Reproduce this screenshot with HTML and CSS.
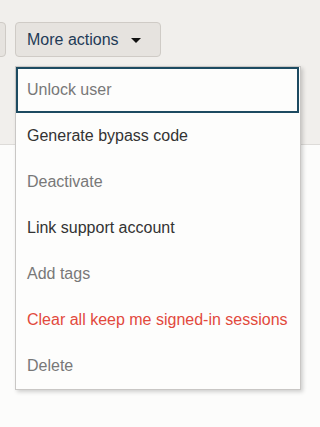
FILE: index.html
```html
<!DOCTYPE html>
<html lang="en">
<head>
<meta charset="utf-8">
<title>More actions</title>
<link rel="stylesheet" href="styles.css">
</head>
<body>
<div class="header">
  <div class="toolbar">
    <button class="btn btn-prev" type="button" aria-label="Previous action"></button>
    <button class="btn btn-more" type="button">More actions <span class="caret"></span></button>
  </div>
</div>
<div class="page"></div>
<ul class="menu" role="menu">
  <li class="item muted focused" role="menuitem">Unlock user</li>
  <li class="item" role="menuitem">Generate bypass code</li>
  <li class="item muted" role="menuitem">Deactivate</li>
  <li class="item" role="menuitem">Link support account</li>
  <li class="item muted" role="menuitem">Add tags</li>
  <li class="item danger" role="menuitem">Clear all keep me signed-in sessions</li>
  <li class="item muted" role="menuitem">Delete</li>
</ul>
</body>
</html>
```
FILE: styles.css
```css
* { box-sizing: border-box; }
html, body {
  margin: 0;
  padding: 0;
  width: 320px;
  height: 427px;
  overflow: hidden;
  background: #fcfcfb;
  font-family: "Liberation Sans", Arial, sans-serif;
  position: relative;
}
.header {
  height: 145px;
  background: #f1efec;
  border-bottom: 1px solid #dddbd8;
}
.toolbar {
  display: flex;
  gap: 9px;
  padding-top: 22px;
}
.btn {
  height: 35px;
  border: 1px solid #cfcbc6;
  border-radius: 4px;
  background: #e6e3df;
  font-family: "Liberation Sans", Arial, sans-serif;
  font-size: 16px;
  color: #1f3b57;
  display: flex;
  align-items: center;
  padding: 0 19px 0 11px;
}
.btn-prev {
  margin-left: -60px;
  width: 66px;
  padding: 0;
}
.caret {
  display: inline-block;
  width: 0;
  height: 0;
  border-left: 5px solid transparent;
  border-right: 5px solid transparent;
  border-top: 5px solid #111111;
  margin-left: 12px;
  margin-top: 1px;
}
.menu {
  position: absolute;
  top: 66px;
  left: 15px;
  width: 286px;
  margin: 0;
  padding: 0;
  list-style: none;
  background: #fdfdfc;
  border: 1px solid #c9c7c5;
  box-shadow: 2px 2px 4px rgba(0, 0, 0, 0.18);
}
.item {
  height: 46px;
  display: flex;
  align-items: center;
  padding-left: 11px;
  font-size: 16px;
  color: #333333;
}
.item.muted { color: #787878; }
.item.danger { color: #e2493c; }
.item.focused {
  border: 2px solid #1d4b61;
  padding-left: 9px;
  margin-right: 1px;
}
```
